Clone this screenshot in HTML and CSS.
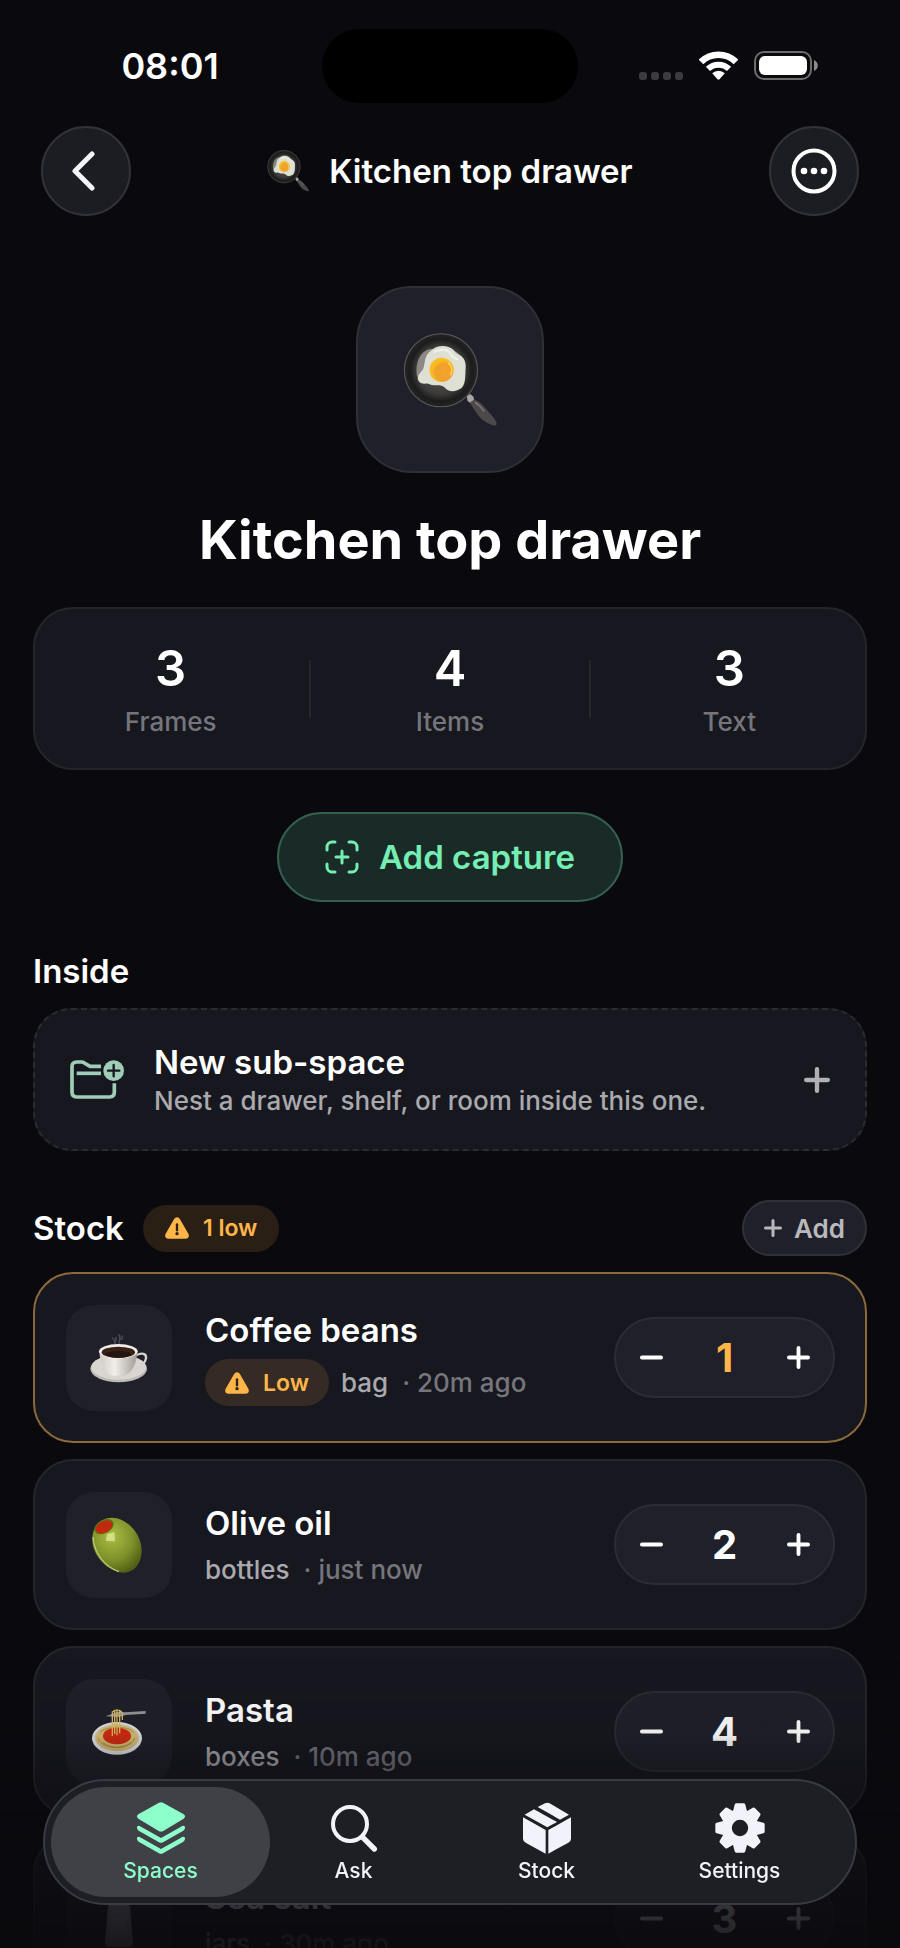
FILE: index.html
```html
<!DOCTYPE html>
<html lang="en">
<head>
  <meta charset="UTF-8">
  <meta name="viewport" content="width=device-width, initial-scale=1">
  <title>Kitchen top drawer</title>
  <link rel="stylesheet" href="styles.css">
</head>
<body>

<!-- shared icons -->
<svg class="sprite" aria-hidden="true">
  <defs>
    <radialGradient id="panFill">
      <stop offset="0" stop-color="#565553"/>
      <stop offset="0.65" stop-color="#3d3c3b"/>
      <stop offset="0.85" stop-color="#1d1c1c"/>
      <stop offset="1" stop-color="#262525"/>
    </radialGradient>
    <radialGradient id="yolk" cx="0.6" cy="0.6">
      <stop offset="0" stop-color="#f3a52b"/>
      <stop offset="0.7" stop-color="#f0a02e"/>
      <stop offset="1" stop-color="#f9bd1d"/>
    </radialGradient>
    <linearGradient id="cup" x1="0" x2="1">
      <stop offset="0" stop-color="#cfc9c3"/>
      <stop offset="0.4" stop-color="#f1eeea"/>
      <stop offset="1" stop-color="#a29b94"/>
    </linearGradient>
    <radialGradient id="oliveFill" cx="0.4" cy="0.35" r="0.7">
      <stop offset="0" stop-color="#a9bd45"/>
      <stop offset="0.6" stop-color="#7f9129"/>
      <stop offset="1" stop-color="#4f5f14"/>
    </radialGradient>
  </defs>

  <symbol id="pan" viewBox="0 0 280 280">
    <path d="M190 188l10-6 10 8 2 14-10 6-10-8z" fill="#aaa7a6"/>
    <path d="M200 206l13-8c16 8 26 16 36 30 12 14 26 28 29 38 3 9-3 12-12 8-12-4-28-12-38-24-10-14-22-28-28-44z" fill="#4d494a"/>
    <path d="M214 206c10 6 20 16 28 28" stroke="#777173" stroke-width="5" fill="none"/>
    <circle cx="113" cy="111" r="109" fill="url(#panFill)" stroke="#5c5a58" stroke-width="3"/>
    <path d="M42 130c-8-40 10-78 40-82l54 0c30 5 47 30 50 48z" fill="#8b8885"/>
    <path d="M84 52c20-20 52-15 66-2 6 9 12 13 22 18 15 10 16 28 14 46 0 22-2 42-12 50-14 12-38 12-46 2-12-12-22-10-36-10-10 0-16-8-26-5-12 2-22-6-22-16 0-12 10-18 16-28 6-12 2-42 24-55z" fill="#dde0d3"/>
    <path d="M92 58c16-12 40-10 48 2 8 14 14 14 24 20" stroke="#f0f1ea" stroke-width="6" fill="none"/>
    <circle cx="115" cy="110" r="36" fill="url(#yolk)"/>
    <path d="M136 90c10 10 12 24 6 34" stroke="#ffd84a" stroke-width="5" fill="none" stroke-linecap="round"/>
  </symbol>

  <symbol id="warn" viewBox="0 0 72 66">
    <path d="M27 7c4-8 14-8 18 0l25 43c4 8 0 15-9 15H11c-9 0-13-7-9-15z" fill="currentColor"/>
    <path d="M36 22v18" stroke="#2b2118" stroke-width="7" stroke-linecap="round"/>
    <circle cx="36" cy="50" r="5" fill="#2b2118"/>
  </symbol>

  <symbol id="plus" viewBox="0 0 24 24">
    <path d="M12 2v20M2 12h20" stroke="currentColor" stroke-width="4" stroke-linecap="round"/>
  </symbol>

  <symbol id="minus" viewBox="0 0 24 24">
    <path d="M2 12h20" stroke="currentColor" stroke-width="4" stroke-linecap="round"/>
  </symbol>
</svg>

<header>
  <div class="statusbar">
    <div class="time">08:01</div>
    <div class="island"></div>
    <div class="signals">
      <svg width="44" height="30" viewBox="0 0 44 30" fill="#3c3c40">
        <rect x="0" y="21" width="8" height="8" rx="3"/>
        <rect x="12" y="21" width="8" height="8" rx="3"/>
        <rect x="24" y="21" width="8" height="8" rx="3"/>
        <rect x="36" y="21" width="8" height="8" rx="3"/>
      </svg>
      <svg width="39" height="29" viewBox="0 0 118 87">
        <g fill="none" stroke="#fff">
          <path d="M6 33a75 75 0 0 1 106 0" stroke-width="20"/>
          <path d="M27 54a46 46 0 0 1 64 0" stroke-width="18"/>
        </g>
        <path d="M40 67a27 27 0 0 1 38 0L62 85q-3 3-6 0z" fill="#fff"/>
      </svg>
      <svg width="64" height="29" viewBox="0 0 64 29">
        <rect x="1" y="1" width="56" height="27" rx="9" fill="none" stroke="#6d6d70" stroke-width="2"/>
        <rect x="5" y="5" width="48" height="19" rx="6" fill="#fff"/>
        <path d="M60 9c5 2 5 9 0 11z" fill="#8c8c8e"/>
      </svg>
    </div>
  </div>

  <div class="navbar">
    <a href="#" class="round-btn" aria-label="Back">
      <svg width="30" height="40" viewBox="0 0 30 40">
        <path d="M21 3L4 20l17 17" fill="none" stroke="#f5f5fa" stroke-width="5" stroke-linecap="round" stroke-linejoin="round"/>
      </svg>
    </a>
    <div class="nav-title">
      <svg width="42" height="42"><use href="#pan"/></svg>
      <span>Kitchen top drawer</span>
    </div>
    <button type="button" class="round-btn" aria-label="More">
      <svg width="46" height="46" viewBox="0 0 46 46">
        <circle cx="23" cy="23" r="20.5" fill="none" stroke="#fff" stroke-width="4"/>
        <g fill="#fff"><circle cx="13" cy="23" r="3.3"/><circle cx="23" cy="23" r="3.3"/><circle cx="33" cy="23" r="3.3"/></g>
      </svg>
    </button>
  </div>
</header>

<main>
  <div class="hero">
    <svg width="94" height="94"><use href="#pan"/></svg>
  </div>
  <h1>Kitchen top drawer</h1>

  <div class="stats">
    <div class="stat"><strong>3</strong><span>Frames</span></div>
    <div class="stat"><strong>4</strong><span>Items</span></div>
    <div class="stat"><strong>3</strong><span>Text</span></div>
  </div>

  <button type="button" class="capture">
    <svg width="34" height="34" viewBox="0 0 34 34" fill="none" stroke="currentColor" stroke-width="3" stroke-linecap="round">
      <path d="M2 10V7a5 5 0 0 1 5-5h3M24 2h3a5 5 0 0 1 5 5v3M32 24v3a5 5 0 0 1-5 5h-3M10 32H7a5 5 0 0 1-5-5v-3M17 11v12M11 17h12"/>
    </svg>
    Add capture
  </button>

  <h2 class="inside">Inside</h2>
  <button type="button" class="subspace">
    <svg class="folder" width="54" height="39" viewBox="0 0 162 117">
      <g fill="none" stroke="#9fcdb8" stroke-width="11">
        <path d="M93 19H60L43 9q-4-3-9-3H20Q6 6 6 20v77q0 14 14 14h99q14 0 14-14V70"/>
        <path d="M20 40h73"/>
      </g>
      <circle cx="131" cy="32" r="31" fill="#9fcdb8"/>
      <path d="M131 15v34M114 32h34" stroke="#17171f" stroke-width="7" stroke-linecap="round"/>
    </svg>
    <span class="subspace-text">
      <span class="name">New sub-space</span>
      <span class="meta">Nest a drawer, shelf, or room inside this one.</span>
    </span>
    <svg class="muted" width="26" height="26"><use href="#plus"/></svg>
  </button>

  <div class="stock-head">
    <h2>Stock</h2>
    <span class="badge"><svg width="24" height="22"><use href="#warn"/></svg>1 low</span>
    <button type="button" class="add"><svg width="18" height="18"><use href="#plus"/></svg>Add</button>
  </div>

  <ul class="stock">
    <li class="item low">
      <div class="tile">
        <svg width="58" height="50" viewBox="0 0 174 150">
          <path d="M76 34c-8-8 10-14 0-22M88 34c-6-10 10-16-2-30M66 14c8 4 6 10 10 18M92 20c8-2 6-10 2-12" stroke="#4d4d53" stroke-width="4" fill="none"/>
          <ellipse cx="86" cy="107" rx="85" ry="41" fill="#bdb9b4"/>
          <ellipse cx="86" cy="103" rx="82" ry="37" fill="#d9d6d1"/>
          <path d="M140 66c16-8 30-4 28 10-2 14-18 26-38 34" stroke="#d6d2cd" stroke-width="7" fill="none"/>
          <path d="M28 54c2 40 16 66 40 74h36c24-10 36-36 38-74z" fill="url(#cup)"/>
          <ellipse cx="85" cy="55" rx="58" ry="22" fill="#efece8"/>
          <ellipse cx="85" cy="58" rx="50" ry="17" fill="#3a2018"/>
          <ellipse cx="85" cy="64" rx="38" ry="10" fill="#241410"/>
        </svg>
      </div>
      <div class="info">
        <span class="name">Coffee beans</span>
        <span class="meta"><span class="badge"><svg width="24" height="22"><use href="#warn"/></svg>Low</span> bag <small>· 20m ago</small></span>
      </div>
      <div class="stepper">
        <button type="button" aria-label="Less"><svg width="23" height="23"><use href="#minus"/></svg></button>
        <output>1</output>
        <button type="button" aria-label="More"><svg width="23" height="23"><use href="#plus"/></svg></button>
      </div>
    </li>

    <li class="item">
      <div class="tile">
        <svg width="56" height="56" viewBox="0 0 168 168">
          <path d="M4 72C2 30 26 4 60 2c44-2 90 44 92 96 1 42-24 70-56 69C52 165 6 118 4 72z" fill="url(#oliveFill)"/>
          <path d="M6 60c4 50 34 88 78 104" stroke="#b7c877" stroke-width="4" fill="none"/>
          <ellipse cx="39" cy="29" rx="31" ry="20" transform="rotate(-28 39 29)" fill="#5d7016"/>
          <ellipse cx="39" cy="30" rx="27" ry="17" transform="rotate(-28 39 30)" fill="#c2290d"/>
          <path d="M48 52l22-7 2 28-28-2z" fill="#dbe58d" opacity="0.85"/>
        </svg>
      </div>
      <div class="info">
        <span class="name">Olive oil</span>
        <span class="meta">bottles <small>· just now</small></span>
      </div>
      <div class="stepper">
        <button type="button" aria-label="Less"><svg width="23" height="23"><use href="#minus"/></svg></button>
        <output>2</output>
        <button type="button" aria-label="More"><svg width="23" height="23"><use href="#plus"/></svg></button>
      </div>
    </li>

    <li class="item">
      <div class="tile">
        <svg width="56" height="48" viewBox="0 0 168 144">
          <ellipse cx="78" cy="91" rx="75" ry="49" fill="#e4e4e8"/>
          <ellipse cx="78" cy="88" rx="67" ry="41" fill="#d0cabd"/>
          <ellipse cx="78" cy="90" rx="64" ry="39" fill="#d8bd74"/>
          <path d="M22 92c10 32 92 38 110-2M26 74c14-18 84-24 102 0M36 104c24 20 60 18 84 0" stroke="#b08c3c" stroke-width="3" fill="none"/>
          <ellipse cx="78" cy="84" rx="42" ry="25" fill="#d22c12"/>
          <path d="M44 25l36-14 22 2 62-4v8l-60 4-20 6z" fill="#96969b"/>
          <path d="M64 10v74M71 6v72M78 4v78M86 6v70M94 12v24M64 12q16-14 30 2" stroke="#d9bb62" stroke-width="4" fill="none"/>
        </svg>
      </div>
      <div class="info">
        <span class="name">Pasta</span>
        <span class="meta">boxes <small>· 10m ago</small></span>
      </div>
      <div class="stepper">
        <button type="button" aria-label="Less"><svg width="23" height="23"><use href="#minus"/></svg></button>
        <output>4</output>
        <button type="button" aria-label="More"><svg width="23" height="23"><use href="#plus"/></svg></button>
      </div>
    </li>

    <li class="item">
      <div class="tile">
        <svg width="30" height="58" viewBox="0 0 30 58">
          <path d="M5 16Q5 0 15 0t10 16z" fill="#c9c9cc"/>
          <path d="M4 16h22l3 38q0 3-3 3H4q-3 0-3-3z" fill="#a3a3a8"/>
          <path d="M8 28h14l2 24H6z" fill="#b4b4b8"/>
        </svg>
      </div>
      <div class="info">
        <span class="name">Sea salt</span>
        <span class="meta">jars <small>· 30m ago</small></span>
      </div>
      <div class="stepper">
        <button type="button" aria-label="Less"><svg width="23" height="23"><use href="#minus"/></svg></button>
        <output>3</output>
        <button type="button" aria-label="More"><svg width="23" height="23"><use href="#plus"/></svg></button>
      </div>
    </li>
  </ul>
</main>

<div class="fade"></div>

<nav class="tabbar">
  <a href="#" class="tab active">
    <svg width="48" height="52" viewBox="0 0 144 156" fill="currentColor">
      <path d="M66 2q6-3 12 0l62 35q8 6 0 13L80 86q-8 5-16 0L4 50q-8-7 0-13z"/>
      <path d="M0 74q4-5 12 0l60 34 60-34q8-5 12 0 1 8-5 12l-61 35q-6 3-12 0L5 86q-6-4-5-12z"/>
      <path d="M0 107q4-5 12 0l60 34 60-34q8-5 12 0 1 8-5 12l-61 35q-6 3-12 0L5 119q-6-4-5-12z"/>
    </svg>
    Spaces
  </a>
  <a href="#" class="tab">
    <svg width="48" height="52" viewBox="0 0 144 156" fill="none" stroke="currentColor" stroke-linecap="round">
      <circle cx="60" cy="66" r="51" stroke-width="12"/>
      <path d="M99 107l34 34" stroke-width="16"/>
    </svg>
    Ask
  </a>
  <a href="#" class="tab">
    <svg width="48" height="52" viewBox="0 0 144 156" fill="currentColor">
      <path d="M5 38l28-16 69 38-29 16z"/>
      <path d="M44 15l22-11q7-3 14 0l58 34-27 15z"/>
      <path d="M0 46l68 38v71L8 122q-8-4-8-12z"/>
      <path d="M76 84l68-38v64q0 8-8 12l-60 33z"/>
    </svg>
    Stock
  </a>
  <a href="#" class="tab">
    <svg width="50" height="52" viewBox="-75 -78 150 156" fill="currentColor">
      <defs><path id="tooth" d="M-21-50l5-20q1-4 5-4h22q4 0 5 4l5 20z"/></defs>
      <circle r="40" fill="none" stroke="currentColor" stroke-width="31"/>
      <use href="#tooth"/>
      <use href="#tooth" transform="rotate(45)"/>
      <use href="#tooth" transform="rotate(90)"/>
      <use href="#tooth" transform="rotate(135)"/>
      <use href="#tooth" transform="rotate(180)"/>
      <use href="#tooth" transform="rotate(225)"/>
      <use href="#tooth" transform="rotate(270)"/>
      <use href="#tooth" transform="rotate(315)"/>
    </svg>
    Settings
  </a>
</nav>

</body>
</html>
```
FILE: styles.css
```css
* {
  box-sizing: border-box;
}
body {
  margin: 0;
  height: 100vh;
  overflow: hidden;
  background: #0a0a0e;
  color: #fff;
  font-family: Inter, "Liberation Sans", sans-serif;
}
svg {
  display: block;
  flex: none;
}
button {
  font: inherit;
  color: inherit;
  cursor: pointer;
}
a {
  color: inherit;
  text-decoration: none;
}
h1, h2 {
  margin: 0;
}
.sprite {
  position: absolute;
  width: 0;
  height: 0;
}

/* status bar */
.statusbar {
  display: grid;
  grid-template-columns: 1fr 256px 1fr;
  align-items: center;
  padding: 29px 0 23px;
}
.time {
  padding-left: 18px;
  text-align: center;
  font-size: 36px;
  font-weight: 600;
}
.island {
  height: 74px;
  border-radius: 37px;
  background: #000;
}
.signals {
  display: flex;
  justify-content: center;
  gap: 16px;
  padding-right: 22px;
}

/* nav bar */
.navbar {
  display: flex;
  align-items: center;
  justify-content: space-between;
  padding: 0 41px;
}
.round-btn {
  display: flex;
  align-items: center;
  justify-content: center;
  width: 90px;
  height: 90px;
  padding: 0;
  border: 2px solid #323239;
  border-radius: 50%;
  background: #1c1c23;
}
.nav-title {
  display: flex;
  align-items: center;
  gap: 20px;
  font-size: 33px;
  font-weight: 600;
}

main {
  padding: 70px 33px 0;
}
.hero {
  display: flex;
  align-items: center;
  justify-content: center;
  width: 188px;
  height: 187px;
  margin: 0 auto;
  border: 2px solid #2f2f36;
  border-radius: 56px;
  background: #20202a;
}
h1 {
  margin: 33px 0;
  text-align: center;
  font-size: 54px;
  line-height: 68px;
  font-weight: 700;
}
h2 {
  font-size: 33px;
  line-height: 40px;
  font-weight: 600;
}

.stats {
  display: grid;
  grid-template-columns: repeat(3, 1fr);
  gap: 8px;
  padding: 30px 0 29px;
  border: 2px solid #25252c;
  border-radius: 40px;
  background: #17171f;
}
.stat {
  position: relative;
  display: flex;
  flex-direction: column;
  align-items: center;
  gap: 6px;
}
.stat + .stat::before {
  content: "";
  position: absolute;
  left: -5px;
  top: 21px;
  width: 2px;
  height: 58px;
  background: #26262d;
}
.stat strong {
  font-size: 49px;
  line-height: 60px;
  font-weight: 600;
}
.stat span {
  font-size: 26px;
  line-height: 34px;
  font-weight: 500;
  color: #75757b;
}

.capture {
  display: flex;
  align-items: center;
  gap: 20px;
  height: 90px;
  margin: 42px auto 49px;
  padding: 0 46px;
  border: 2px solid #33604f;
  border-radius: 45px;
  background: #1a2a26;
  color: #74eeb2;
  font-size: 33px;
  font-weight: 600;
}

.subspace {
  display: flex;
  align-items: center;
  width: 100%;
  height: 143px;
  margin: 17px 0 49px;
  padding: 0 35px;
  border: 2px dashed #2b2b32;
  border-radius: 38px;
  background: #17171f;
  text-align: left;
}
.subspace-text {
  flex: 1;
  margin-left: 30px;
}
.name {
  display: block;
  font-size: 33px;
  line-height: 42px;
  font-weight: 600;
}
.meta {
  display: flex;
  align-items: center;
  font-size: 26px;
  line-height: 36px;
  font-weight: 500;
  color: #a9a9ae;
}
.meta small {
  margin-left: 14px;
  font-size: 26px;
  color: #75757b;
}
.muted {
  color: #b0b0b5;
}

.stock-head {
  display: flex;
  align-items: center;
  gap: 19px;
  height: 56px;
}
.badge {
  display: flex;
  align-items: center;
  gap: 14px;
  height: 47px;
  padding: 0 22px;
  border-radius: 24px;
  background: rgba(255, 178, 72, 0.13);
  color: #ffb548;
  font-size: 23px;
  font-weight: 600;
}
.meta .badge {
  margin-right: 12px;
  padding: 0 20px;
}
.add {
  display: flex;
  align-items: center;
  gap: 12px;
  height: 56px;
  margin-left: auto;
  padding: 0 20px;
  border: 2px solid #303038;
  border-radius: 28px;
  background: #20202a;
  color: #b8b8bd;
  font-size: 26px;
  font-weight: 600;
}

.stock {
  display: grid;
  gap: 16px;
  margin: 16px 0 0;
  padding: 0;
  list-style: none;
}
.item {
  display: flex;
  align-items: center;
  height: 171px;
  padding: 0 30px 0 31px;
  border: 2px solid #25252c;
  border-radius: 40px;
  background: #17171f;
}
.item.low {
  border-color: #8c6a3a;
}
.tile {
  display: flex;
  align-items: center;
  justify-content: center;
  width: 106px;
  height: 106px;
  border-radius: 28px;
  background: #20202a;
}
.info {
  display: grid;
  flex: 1;
  gap: 8px;
  margin-left: 33px;
}
.stepper {
  display: flex;
  align-items: center;
  width: 221px;
  height: 81px;
  border: 2px solid #2c2c35;
  border-radius: 41px;
  background: #20202a;
}
.stepper button {
  display: flex;
  align-items: center;
  justify-content: center;
  width: 70px;
  height: 70px;
  padding: 0;
  border: 0;
  background: none;
}
.stepper output {
  flex: 1;
  text-align: center;
  font-size: 40px;
  font-weight: 700;
}
.low output {
  color: #ffb548;
}

/* content fades out under the tab bar */
.fade {
  position: fixed;
  left: 0;
  right: 0;
  bottom: 0;
  height: 290px;
  background: linear-gradient(rgba(10, 10, 14, 0), rgba(10, 10, 14, 0.08) 26%, rgba(10, 10, 14, 0.35) 38%, rgba(10, 10, 14, 0.83) 85%, rgba(10, 10, 14, 0.92));
}

.tabbar {
  position: fixed;
  left: 43px;
  right: 43px;
  bottom: 43px;
  display: flex;
  padding: 6px 19px;
  border: 2px solid #3a3a45;
  border-radius: 63px;
  background: #1e1e25;
}
.tab {
  display: flex;
  flex: 1;
  flex-direction: column;
  align-items: center;
  gap: 4px;
  height: 110px;
  margin: 0 -13px;
  padding-top: 15px;
  border-radius: 55px;
  color: #f2f2fa;
  font-size: 21px;
  line-height: 26px;
  font-weight: 500;
}
.tab.active {
  background: #404047;
  color: #8cffcb;
}
```
